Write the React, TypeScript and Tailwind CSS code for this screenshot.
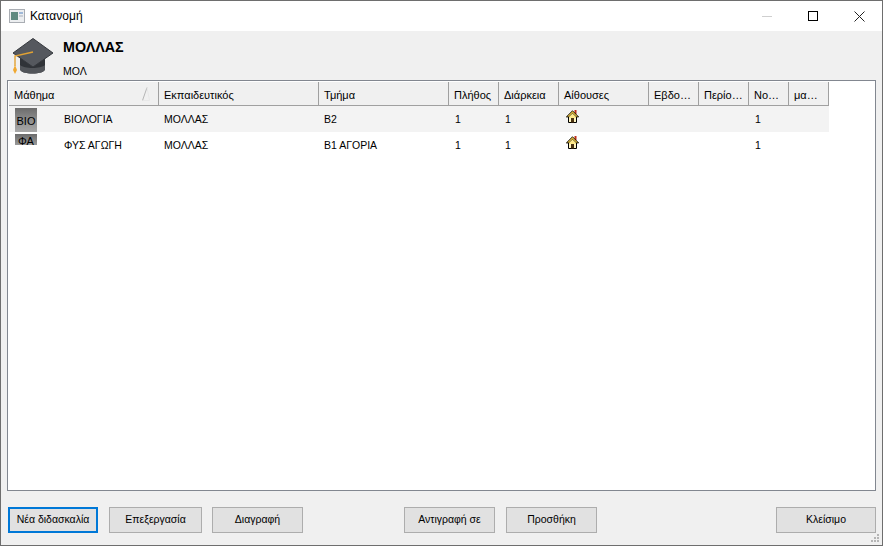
// App.tsx
import React from 'react';

const columns = [
  { label: 'Μάθημα', width: 'w-[150px]' },
  { label: 'Εκπαιδευτικός', width: 'w-[160px]' },
  { label: 'Τμήμα', width: 'w-[130px]' },
  { label: 'Πλήθος', width: 'w-[50px]' },
  { label: 'Διάρκεια', width: 'w-[60px]' },
  { label: 'Αίθουσες', width: 'w-[90px]' },
  { label: 'Εβδο…', width: 'w-[50px]' },
  { label: 'Περίο…', width: 'w-[50px]' },
  { label: 'Νο…', width: 'w-[40px]' },
  { label: 'μα…', width: 'w-[40px]' },
];

const rows = [
  { code: 'ΒΙΟ', subject: 'ΒΙΟΛΟΓΙΑ', teacher: 'ΜΟΛΛΑΣ', group: 'Β2', clipped: false },
  { code: 'ΦΑ', subject: 'ΦΥΣ ΑΓΩΓΗ', teacher: 'ΜΟΛΛΑΣ', group: 'Β1 ΑΓΟΡΙΑ', clipped: true },
];

function HouseIcon() {
  return (
    <svg width="13" height="13" viewBox="0 0 13 13">
      <rect x="8.5" y="0" width="2" height="4" fill="#c0301c" />
      <path d="M2.5 6.5 V12.5 H10.5 V6.5" fill="#fff4c0" stroke="#000" strokeWidth="1" />
      <path d="M6.5 .8 L12.6 6.9 H10.2 L6.5 3.4 L2.8 6.9 H.4 Z" fill="#f5c83a" stroke="#000" strokeWidth=".9" />
      <path d="M6.5 3.4 L10 6.9 V8 H3 V6.9 Z" fill="#ffe98a" />
      <rect x="5" y="8" width="3" height="4.5" fill="#4a3210" />
    </svg>
  );
}

function CapIcon() {
  return (
    <svg width="44" height="38" viewBox="0 0 44 38">
      <path d="M8 16 V31 C8 37 33 37 33 31 V16 Z" fill="#303338" />
      <path d="M8 27 C12 31 29 31 33 27 V31 C33 37 8 37 8 31 Z" fill="#52555a" />
      <path d="M21 .5 L41 15 L21 29 L1 15 Z" fill="#55585e" stroke="#35383d" strokeWidth="1" />
      <path d="M21 14 L3 18 V28" stroke="#e2a233" strokeWidth="1.4" fill="none" />
      <path d="M3 27 L5 32 L3 36 L1 32 Z" fill="#f0a830" />
    </svg>
  );
}

function Btn({ label, width, focused }: { label: string; width: string; focused?: boolean }) {
  return (
    <button
      className={
        focused
          ? `${width} h-[26px] bg-[#e1e1e1] border-2 border-[#0078d7] text-[10.5px] text-black`
          : `${width} h-[26px] bg-[#e1e1e1] border border-[#adadad] text-[10.5px] text-black`
      }
    >
      {label}
    </button>
  );
}

export default function App() {
  return (
    <div className="w-[883px] h-[546px] flex flex-col overflow-hidden bg-[#f0f0f0] border border-[#6e6e6e] text-[10.5px] text-black font-['Liberation_Sans',sans-serif]">
      {/* Title bar */}
      <div className="h-[30px] shrink-0 bg-white flex items-center">
        <svg className="ml-[8px]" width="16" height="14" viewBox="0 0 16 14">
          <rect x=".5" y=".5" width="15" height="13" fill="#eceef0" stroke="#a9adb3" />
          <rect x="2" y="3" width="7" height="8" fill="#5f8a80" />
          <rect x="10" y="3" width="4" height="2" fill="#9fb8d8" />
          <rect x="10" y="6" width="4" height="2" fill="#c9ced6" />
        </svg>
        <span className="ml-[5px] text-[12px]">Κατανομή</span>
        <div className="ml-auto flex items-center">
          <div className="w-[46px] h-[30px] flex items-center justify-center">
            <div className="w-[10px] h-px bg-[#cfcfcf]" />
          </div>
          <div className="w-[46px] h-[30px] flex items-center justify-center">
            <div className="w-[10px] h-[10px] border border-black" />
          </div>
          <div className="w-[46px] h-[30px] flex items-center justify-center">
            <svg width="11" height="11" viewBox="0 0 11 11">
              <path d="M.5 .5 L10.5 10.5 M10.5 .5 L.5 10.5" stroke="#222" strokeWidth="1" />
            </svg>
          </div>
        </div>
      </div>

      {/* Teacher header */}
      <div className="h-[49px] shrink-0 flex pl-[11px]">
        <div className="pt-[7px]">
          <CapIcon />
        </div>
        <div className="ml-[7px] flex flex-col">
          <span className="mt-[7px] text-[14.3px] leading-[18px] font-bold">ΜΟΛΛΑΣ</span>
          <span className="mt-[8px] leading-[14px]">ΜΟΛ</span>
        </div>
      </div>

      {/* Table */}
      <div className="mx-[6px] h-[411px] shrink-0 bg-white border border-[#828790] pt-px pl-px">
        <div className="flex h-[24px] w-fit border-b border-[#a0a0a0] bg-[#f0f0f0] text-[11px]">
          {columns.map((col, i) => (
            <div
              key={col.label}
              className={`${col.width} relative flex items-center pl-[5px] pt-[4px] border-r border-[#a0a0a0] whitespace-nowrap`}
            >
              {col.label}
              {i === 0 && (
                <svg className="absolute right-[8px] top-[5px]" width="8" height="14" viewBox="0 0 8 14">
                  <path d="M5 .5 L.5 13.5" stroke="#b5b5b5" strokeWidth="1" fill="none" />
                  <path d="M5 .5 L7.5 13.5 H.5" stroke="#e8e8e8" strokeWidth="1" fill="none" />
                </svg>
              )}
            </div>
          ))}
        </div>
        {rows.map((row, i) => (
          <div
            key={row.code}
            className={i === 0 ? 'flex h-[26px] w-fit bg-[#f3f3f3]' : 'flex h-[26px] w-fit'}
          >
            <div className="w-[150px] flex items-center">
              <div className="w-[48px] pl-[6px] self-start">
                {row.clipped ? (
                  <div className="mt-[2px] w-[22px] h-[11px] overflow-hidden bg-gradient-to-b from-[#6c6c6c] to-[#9a9a9a] text-center leading-[14px] text-[11px]">
                    {row.code}
                  </div>
                ) : (
                  <div className="mt-[2px] w-[22px] h-[24px] bg-gradient-to-b from-[#6c6c6c] via-[#8e8e8e] to-[#a8a8a8] text-center leading-[26px] text-[11px]">
                    {row.code}
                  </div>
                )}
              </div>
              <span className="ml-[7px] pt-[2px]">{row.subject}</span>
            </div>
            <div className="w-[160px] flex items-center pl-[5px] pt-[2px]">{row.teacher}</div>
            <div className="w-[130px] flex items-center pl-[5px] pt-[2px]">{row.group}</div>
            <div className="w-[50px] flex items-center pl-[6px] pt-[2px]">1</div>
            <div className="w-[60px] flex items-center pl-[6px] pt-[2px]">1</div>
            <div className="w-[90px] pl-[7px] pt-[4px]">
              <HouseIcon />
            </div>
            <div className="w-[50px]" />
            <div className="w-[50px]" />
            <div className="w-[40px] flex items-center pl-[6px] pt-[2px]">1</div>
            <div className="w-[40px]" />
          </div>
        ))}
      </div>

      {/* Buttons */}
      <div className="relative flex-1 flex items-start pt-[16px] pl-[7px]">
        <Btn label="Νέα διδασκαλία" width="w-[90px]" focused />
        <div className="ml-[11px]">
          <Btn label="Επεξεργασία" width="w-[93px]" />
        </div>
        <div className="ml-[10px]">
          <Btn label="Διαγραφή" width="w-[91px]" />
        </div>
        <div className="ml-[101px]">
          <Btn label="Αντιγραφή σε" width="w-[91px]" />
        </div>
        <div className="ml-[11px]">
          <Btn label="Προσθήκη" width="w-[91px]" />
        </div>
        <div className="ml-[179px]">
          <Btn label="Κλείσιμο" width="w-[100px]" />
        </div>
        <svg className="absolute right-[3px] bottom-[3px]" width="8" height="8" viewBox="0 0 8 8" fill="#b5b5b5">
          <rect x="6" y="0" width="2" height="2" />
          <rect x="3" y="3" width="2" height="2" />
          <rect x="6" y="3" width="2" height="2" />
          <rect x="0" y="6" width="2" height="2" />
          <rect x="3" y="6" width="2" height="2" />
          <rect x="6" y="6" width="2" height="2" />
        </svg>
      </div>
    </div>
  );
}
